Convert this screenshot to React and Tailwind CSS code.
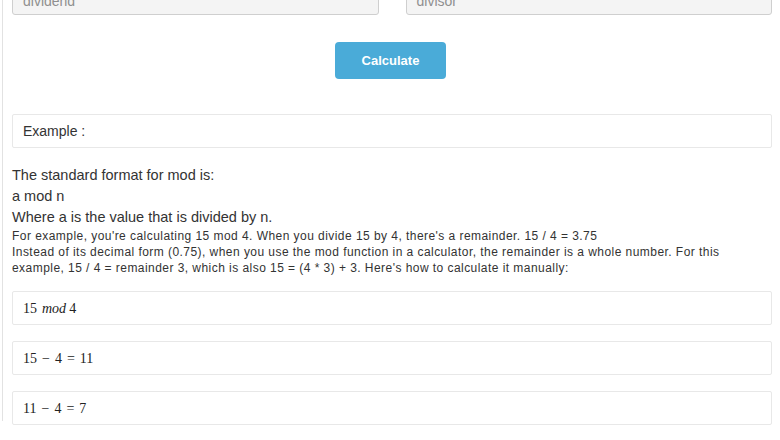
import React from 'react';

const MathBox = ({ children }) => (
    <div className="h-[34px] border border-[#e8e8e8] rounded-[2px] flex items-center px-[10px] text-[14px] text-[#222]" style={{ fontFamily: '"Liberation Serif", "DejaVu Serif", serif' }}>
        {children}
    </div>
);

const Op = ({ children }) => <span className="mx-[5px]">{children}</span>;

const App = () => {
    return (
        <div className="w-[780px] h-[440px] overflow-hidden bg-white" style={{ fontFamily: '"Liberation Sans", Arial, sans-serif' }}>
            <div className="ml-[2px] border-l border-[#e2e2e2] pl-[9px] pr-[8px] h-full">
                {/* Inputs */}
                <div className="flex gap-[27px] mt-[-19px]">
                    <div className="flex-1 h-[34px] bg-[#f4f4f4] border border-[#cfcfcf] rounded-[3px] flex items-end pb-[2px] px-[10px] text-[14px] text-[#8f8f8f]">
                        dividend
                    </div>
                    <div className="flex-1 h-[34px] bg-[#f4f4f4] border border-[#cfcfcf] rounded-[3px] flex items-end pb-[2px] px-[10px] text-[14px] text-[#8f8f8f]">
                        divisor
                    </div>
                </div>

                {/* Button */}
                <div className="flex justify-center mt-[27px] pr-[3px]">
                    <button className="w-[111px] h-[37px] rounded-[4px] bg-[#4aabd8] text-white text-[13px] font-bold">
                        Calculate
                    </button>
                </div>

                {/* Example */}
                <div className="mt-[35px] h-[34px] border border-[#e8e8e8] rounded-[2px] flex items-center px-[10px] text-[14px] text-[#333]">
                    Example :
                </div>

                <div className="mt-[17px] text-[#333]">
                    <p className="text-[14.5px] leading-[21px]">The standard format for mod is:</p>
                    <p className="text-[14.5px] leading-[21px]">a mod n</p>
                    <p className="text-[14.5px] leading-[21px]">Where a is the value that is divided by n.</p>
                    <p className="text-[12px] leading-[16px] tracking-[0.45px]">For example, you're calculating 15 mod 4. When you divide 15 by 4, there's a remainder. 15 / 4 = 3.75</p>
                    <p className="text-[12px] leading-[16px] tracking-[0.45px] pr-[30px]">Instead of its decimal form (0.75), when you use the mod function in a calculator, the remainder is a whole number. For this example, 15 / 4 = remainder 3, which is also 15 = (4 * 3) + 3. Here's how to calculate it manually:</p>
                </div>

                <div className="mt-[15px] flex flex-col gap-[16px]">
                    <MathBox>
                        <span>15</span>
                        <span className="italic ml-[5px]">mod</span>
                        <span className="ml-[3px]">4</span>
                    </MathBox>
                    <MathBox>15<Op>−</Op>4<Op>=</Op>11</MathBox>
                    <MathBox>11<Op>−</Op>4<Op>=</Op>7</MathBox>
                </div>
            </div>
        </div>
    );
};

export default App;
